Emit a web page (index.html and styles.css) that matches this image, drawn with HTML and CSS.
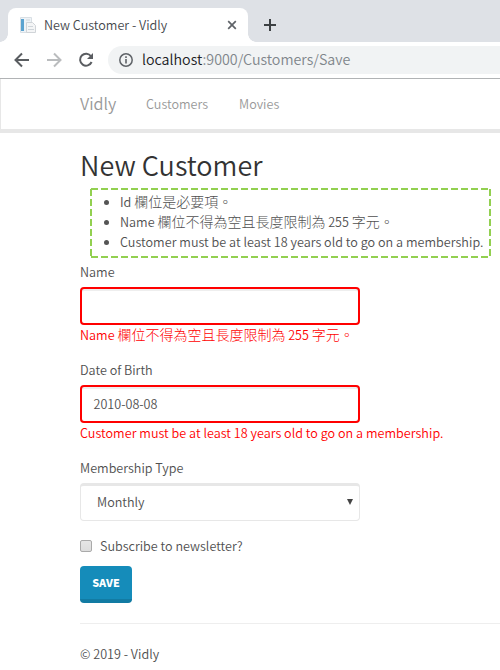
FILE: index.html
```html
<!DOCTYPE html>
<html lang="zh-Hant">
<head>
<meta charset="utf-8">
<title>New Customer - Vidly</title>
<link rel="stylesheet" href="styles.css">
</head>
<body>
<div class="tabstrip">
  <div class="tab">
    <svg class="favicon" width="16" height="16" viewBox="0 0 16 16"><path d="M.5.5h11v15H.5z" fill="#eef3f7" stroke="#d9dfe4"/><path d="M1 2h3v12H1z" fill="#5ba3d0"/><path d="M6.500 5.500h6l3 3v7h-9z" fill="#f4f5f6" stroke="#d0d4d8"/><path d="M6 3h4M8 9.500h5M8 12.500h6" stroke="#cfd5da"/></svg>
    <span class="tab-title">New Customer - Vidly</span>
    <svg class="tab-close" width="10" height="10" viewBox="0 0 10 10"><path d="M1.200 1.200l7.600 7.600M8.800 1.200L1.200 8.800" stroke="#5f6368" stroke-width="1.700"/></svg>
  </div>
  <svg class="tab-add" width="12" height="12" viewBox="0 0 12 12"><path d="M6 0v12M0 6h12" stroke="#3c4043" stroke-width="2"/></svg>
</div>
<div class="toolbar">
  <svg class="nav-icon" width="16" height="16" viewBox="0 0 16 16"><path d="M15 8H2M8 1.500L1.500 8 8 14.500" fill="none" stroke="#5a5d61" stroke-width="2"/></svg>
  <svg class="nav-icon" width="16" height="16" viewBox="0 0 16 16"><path d="M1 8h13M8 1.500L14.500 8 8 14.500" fill="none" stroke="#babcbe" stroke-width="2"/></svg>
  <svg class="nav-icon" width="16" height="16" viewBox="0 0 16 16"><path d="M13 4.200A6 6 0 1 0 13.600 10" fill="none" stroke="#5a5d61" stroke-width="2"/><path d="M15 1v6H9z" fill="#5a5d61"/></svg>
  <div class="omnibox">
    <svg class="info" width="14" height="14" viewBox="0 0 14 14"><circle cx="7" cy="7" r="6.200" fill="none" stroke="#5f6368" stroke-width="1.500"/><path d="M7 6v4.500M7 3.300v1.600" stroke="#5f6368" stroke-width="1.600"/></svg>
    <span class="url"><b>localhost</b>:9000/Customers/Save</span>
  </div>
</div>
<nav class="navbar">
  <a class="brand">Vidly</a>
  <a class="nav-customers">Customers</a>
  <a class="nav-movies">Movies</a>
</nav>
<main class="container">
  <h2>New Customer</h2>
  <div class="summary">
    <svg class="summary-frame" width="402" height="71"><path d="M1 2H401M1 70H401" /><path d="M1 2V71M400 2V71"/></svg>
    <ul>
      <li>Id <span class="zh">欄位是必要項。</span></li>
      <li>Name <span class="zh">欄位不得為空且長度限制為</span> 255 <span class="zh">字元。</span></li>
      <li class="long">Customer must be at least 18 years old to go on a membership.</li>
    </ul>
  </div>
  <form>
    <div class="group">
      <label>Name</label>
      <div class="control invalid"></div>
      <p class="error">Name <span class="zh">欄位不得為空且長度限制為</span> 255 <span class="zh">字元。</span></p>
    </div>
    <div class="group">
      <label>Date of Birth</label>
      <div class="control invalid">2010-08-08</div>
      <p class="error long">Customer must be at least 18 years old to go on a membership.</p>
    </div>
    <div class="group">
      <label>Membership Type</label>
      <div class="control select">Monthly<svg width="6" height="6" viewBox="0 0 6 6"><path d="M0 0h6L3 6z" fill="#444"/></svg></div>
    </div>
    <div class="check"><span class="box"></span><span>Subscribe to newsletter?</span></div>
    <button type="button" class="save">SAVE</button>
  </form>
  <hr>
  <footer>© 2019 - Vidly</footer>
</main>
</body>
</html>
```

FILE: styles.css
```css
* { box-sizing: border-box; }
body {
  margin: 0; width: 500px; height: 670px; overflow: hidden; background: #fff; color: #505050;
  font: 350 12.600px/20px "Noto Sans CJK TC", sans-serif;
}
svg { display: block; flex: none; }
.tabstrip { height: 42px; background: #dee1e6; display: flex; padding: 8px 0 0 8px; }
.tab {
  position: relative; width: 240px; height: 34px; background: #fff; border-radius: 8px 8px 0 0;
  display: flex; align-items: center; padding: 0 11px 0 12px; color: #45484c;
}
.tab::before, .tab::after {
  content: ""; position: absolute; bottom: 0; width: 8px; height: 8px;
  background: radial-gradient(circle at 0 0, transparent 7.500px, #fff 8px);
}
.tab::before { left: -8px; }
.tab::after { right: -8px; transform: scaleX(-1); }
.tab-title { margin-left: 8px; flex: 1; font-size: 12.600px; }
.tab-add { margin: 11px 0 0 16px; }
.toolbar { height: 37px; display: flex; align-items: center; padding-left: 14px; border-bottom: 1px solid #b1b3b5; }
.nav-icon { margin-right: 16px; }
.omnibox { margin-left: -2px; flex: 1; height: 28px; border-radius: 14px 0 0 14px; background: #f1f3f4; display: flex; align-items: center; padding-left: 11px; }
.url { margin-left: 9px; font-size: 14.250px; color: #80868b; margin-top: -2px; }
.url b { font-weight: 350; color: #202124; }
.navbar { height: 54px; border-left: 1px solid #e7e7e7; border-bottom: 4px solid #e7e7e7; display: flex; align-items: center; padding-left: 79px; color: #999; }
.brand { font-size: 16.200px; width: 66px; margin-top: -2px; }
.nav-customers { width: 93px; }
.container { padding: 16px 0 0 80px; }
h2 { margin: 0; font-size: 27px; line-height: 31px; height: 33px; font-weight: 350; color: #333; }
.summary { position: relative; margin: 5px 0 4px 10px; width: 402px; height: 71px; padding: 5px 0 0 30px; }
.summary-frame { position: absolute; left: 0; top: 0; }
.summary-frame path { stroke: #92d050; stroke-width: 2; stroke-dasharray: 7 3; fill: none; }
ul { margin: 0; padding: 0; list-style: none; }
li { position: relative; white-space: nowrap; }
li::before { content: ""; position: absolute; left: -16px; top: 8px; width: 5px; height: 5px; border-radius: 50%; background: #555; }
.long { letter-spacing: 0.018px; }
.zh { font-weight: 300; font-size: 14px; line-height: 0; }
label { display: block; height: 25px; }
.group { height: 98px; }
.control { width: 280px; height: 38px; border: 1px solid #e7e7e7; border-top-width: 3px; border-radius: 4px; display: flex; align-items: center; }
.invalid { border: 2px solid #f00; box-shadow: inset 0 2px 0 #eee; padding-left: 11.500px; }
.select { padding: 0 6px 2px 16px; justify-content: space-between; }
.error { margin: 0; color: #f00; white-space: nowrap; }
.group:nth-child(3) { height: 78px; }
.check { display: flex; align-items: center; gap: 8px; height: 20px; }
.box { width: 12px; height: 12px; border: 1px solid #aaa; border-radius: 2px; background: linear-gradient(#e6e6e6, #ddd); }
.save { display: block; margin: 10px 0 0; padding: 0; width: 52px; height: 37px; border: 0; border-bottom: 4px solid #127ba3; border-radius: 4px; background: #158cba; color: #fff; font: 900 10.800px/33px "Noto Sans CJK TC", sans-serif; }
hr { margin: 20px 0; border: 0; border-top: 1px solid #eee; }
```
